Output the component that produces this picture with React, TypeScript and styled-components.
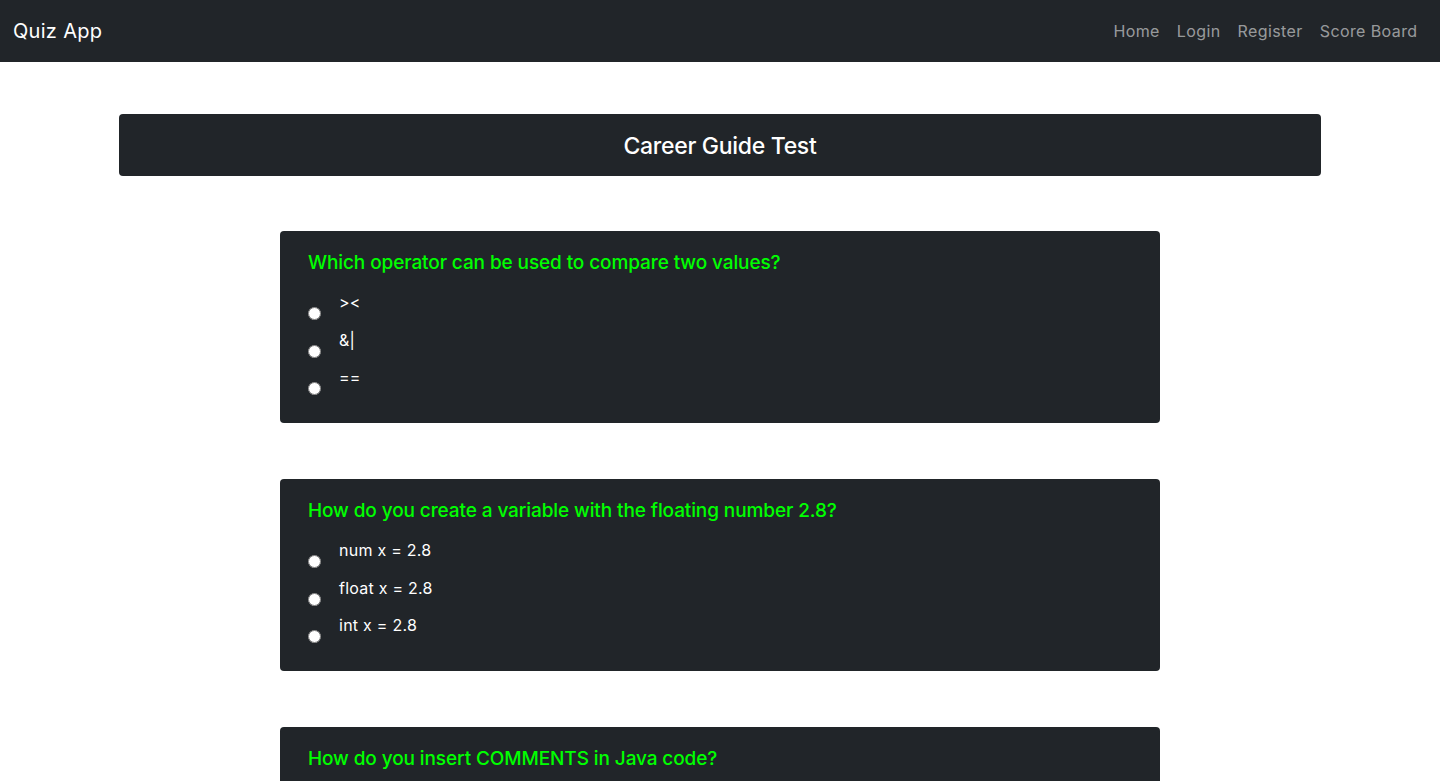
import React from "react";
import styled, { createGlobalStyle } from "styled-components";

const GlobalStyle = createGlobalStyle`
  * {
    box-sizing: border-box;
  }
  body {
    margin: 0;
    font-family: Inter, "Noto Sans", "Liberation Sans", sans-serif;
    background: #fff;
    color: #212529;
  }
`;

const Navbar = styled.nav`
  height: 62px;
  background: #212529;
  display: flex;
  align-items: center;
  justify-content: space-between;
  padding: 0 14px 0 13px;
`;

const Brand = styled.a`
  color: #fff;
  font-size: 20px;
  text-decoration: none;
  letter-spacing: 0.3px;
`;

const NavLinks = styled.div`
  display: flex;
  align-items: center;
`;

const NavLink = styled.a`
  color: rgba(255, 255, 255, 0.55);
  font-size: 16px;
  padding: 8px 8.5px;
  text-decoration: none;
  letter-spacing: 0.4px;
`;

const Main = styled.main`
  display: flex;
  flex-direction: column;
  align-items: center;
  padding: 52px 0 40px;
`;

const TitleBar = styled.div`
  width: 1202px;
  height: 62px;
  background: #212529;
  border-radius: 4px;
  display: flex;
  align-items: center;
  justify-content: center;
  margin-bottom: 55px;
`;

const Title = styled.h3`
  margin: 0;
  color: #fff;
  font-size: 23px;
  font-weight: 500;
  letter-spacing: -0.3px;
  transform: translateY(1px);
`;

const QuestionList = styled.div`
  display: flex;
  flex-direction: column;
  gap: 56px;
`;

const Card = styled.div`
  width: 880px;
  background: #212529;
  border-radius: 4px;
  padding: 20px 28px 19.5px;
`;

const Question = styled.h5`
  margin: 0 0 16px;
  color: #00ff00;
  font-size: 19px;
  line-height: 24px;
  font-weight: 500;
  letter-spacing: -0.1px;
`;

const Option = styled.label`
  display: flex;
  align-items: flex-start;
  height: 37.5px;
  cursor: pointer;
`;

const Radio = styled.input`
  width: 13px;
  height: 13px;
  margin: 16px 18px 0 0;
  flex-shrink: 0;
`;

const OptionText = styled.span`
  color: #fff;
  font-size: 16px;
  line-height: 22px;
  letter-spacing: 0.25px;
`;

const questions = [
  {
    q: "Which operator can be used to compare two values?",
    options: ["><", "&|", "=="],
  },
  {
    q: "How do you create a variable with the floating number 2.8?",
    options: ["num x = 2.8", "float x = 2.8", "int x = 2.8"],
  },
  {
    q: "How do you insert COMMENTS in Java code?",
    options: ["// This is a comment", "/* This is a comment", "# This is a comment"],
  },
];

export default function App() {
  return (
    <>
      <GlobalStyle />
      <Navbar>
        <Brand href="#">Quiz App</Brand>
        <NavLinks>
          <NavLink href="#">Home</NavLink>
          <NavLink href="#">Login</NavLink>
          <NavLink href="#">Register</NavLink>
          <NavLink href="#">Score Board</NavLink>
        </NavLinks>
      </Navbar>
      <Main>
        <TitleBar>
          <Title>Career Guide Test</Title>
        </TitleBar>
        <QuestionList>
          {questions.map((item, i) => (
            <Card key={i}>
              <Question>{item.q}</Question>
              {item.options.map((opt) => (
                <Option key={opt}>
                  <Radio type="radio" name={"q" + i} />
                  <OptionText>{opt}</OptionText>
                </Option>
              ))}
            </Card>
          ))}
        </QuestionList>
      </Main>
    </>
  );
}
